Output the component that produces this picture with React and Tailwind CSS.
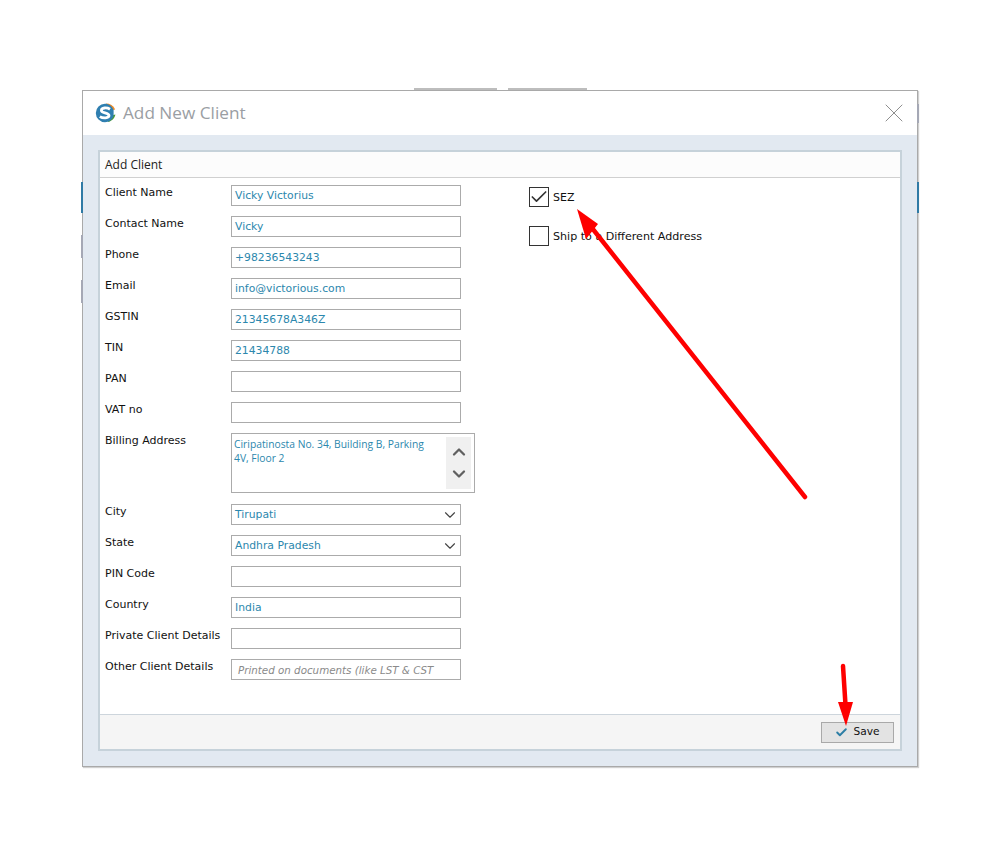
import React from 'react';
import { Check, ChevronDown, ChevronUp, X } from 'lucide-react';

const verdana = 'font-["DejaVu_Sans",sans-serif] text-[11px]';
const valueText = 'font-["DejaVu_Sans",sans-serif] text-[10.8px] text-[#2c87ad]';

function Row({ label, children }) {
  return (
    <div className="flex items-start">
      <div className={`w-[126px] pt-[1px] leading-[14px] text-[#111] ${verdana}`}>{label}</div>
      {children}
    </div>
  );
}

function Field({ label, value, placeholder }) {
  return (
    <Row label={label}>
      <div className={`flex h-[21px] w-[230px] items-center overflow-hidden whitespace-nowrap border border-[#ababab] bg-white px-[3px] pt-[2px] ${valueText}`}>
        {placeholder ? <span className="pl-[3px] text-[10.3px] italic text-[#8a8a8a]">{placeholder}</span> : value}
      </div>
    </Row>
  );
}

function Picker({ label, value }) {
  return (
    <Row label={label}>
      <div className={`flex h-[21px] w-[230px] items-center justify-between border border-[#ababab] bg-white pl-[3px] pr-[1px] ${valueText}`}>
        <span className="pt-[2px]">{value}</span>
        <ChevronDown className="h-[18px] w-[18px] text-[#444]" strokeWidth={1.5} />
      </div>
    </Row>
  );
}

function Logo() {
  return (
    <svg width="22" height="20" viewBox="0 0 22 20" className="shrink-0">
      <path d="M11 0.6 C15 0.6 18.4 2.6 20.2 6.4 L15.6 7.6 Z" fill="#f08a24" />
      <path d="M20.4 11.4 C19.6 15.4 16.6 18 13 19 L14.6 13 Z" fill="#4a9a34" />
      <path d="M10 0.8 A9.2 9.2 0 1 0 10 19.2 C14 19.2 17.4 16.6 18.6 13 L18.6 7 C17.4 3.4 14 0.8 10 0.8 Z" fill="#2f7fb0" />
      <path d="M15 6.2 C12 4.4 6.4 4.4 6.4 7.4 C6.4 10.4 14 9.2 14 12.6 C14 15.4 8 15.6 4.8 13.6" fill="none" stroke="#fff" strokeWidth="2.8" />
    </svg>
  );
}

function Arrows() {
  return (
    <svg width="1000" height="855" className="pointer-events-none absolute left-0 top-0">
      <line x1="805" y1="497" x2="592" y2="228" stroke="#fe0000" strokeWidth="4.5" strokeLinecap="round" />
      <polygon points="577,209 598,224 586,239" fill="#fe0000" />
      <line x1="843" y1="666" x2="845.5" y2="705" stroke="#fe0000" strokeWidth="4.5" strokeLinecap="round" />
      <polygon points="846,726 838,702 853,702" fill="#fe0000" />
    </svg>
  );
}

export default function App() {
  return (
    <div className="relative h-[855px] w-[1000px] overflow-hidden bg-white pt-[90px] pl-[82px]">
      <div className="flex h-[677px] w-[836px] flex-col border border-[#a9a9a9] shadow-[1px_1px_1px_#d0d0d0]">
        <div className="flex h-[44px] shrink-0 items-center justify-between bg-white pl-[12px] pr-[7px]">
          <div className="flex items-center gap-[6px]">
            <Logo />
            <span className='font-["Open_Sans",sans-serif] text-[17.2px] text-[#9a9ea3]'>Add New Client</span>
          </div>
          <X className="h-[32px] w-[32px] text-[#8e8e8e]" strokeWidth={0.75} />
        </div>

        <div className="flex-1 bg-[#e2e9f1] px-[15px] pt-[15px] pb-[15px]">
          <div className="flex h-full flex-col border-2 border-[#c6d2da] bg-white">
            <div className='flex h-[26px] shrink-0 items-center border-b border-[#d0d0d0] bg-[#fcfcfc] pl-[5px] font-["Open_Sans",sans-serif] text-[12px] text-[#222]'>
              Add Client
            </div>

            <div className="flex flex-1 pl-[5px] pt-[7px]">
              <div className="flex w-[424px] flex-col gap-[10px]">
                <Field label="Client Name" value="Vicky Victorius" />
                <Field label="Contact Name" value="Vicky" />
                <Field label="Phone" value="+98236543243" />
                <Field label="Email" value="info@victorious.com" />
                <Field label="GSTIN" value="21345678A346Z" />
                <Field label="TIN" value="21434788" />
                <Field label="PAN" value="" />
                <Field label="VAT no" value="" />
                <div className="mb-[1px]">
                  <Row label="Billing Address">
                    <div className='flex h-[60px] w-[244px] justify-between border border-[#ababab] bg-white pl-[2px] pr-[3px] pt-[3px] font-["Open_Sans",sans-serif] text-[10.3px] leading-[14px] text-[#2c87ad]'>
                      <span className="w-[200px]">Ciripatinosta No. 34, Building B, Parking 4V, Floor 2</span>
                      <div className="flex h-[52px] w-[25px] flex-col items-center justify-between bg-[#f0f0f0] py-[5px] text-[#606060]">
                        <ChevronUp className="h-[20px] w-[20px]" strokeWidth={2.75} />
                        <ChevronDown className="h-[20px] w-[20px]" strokeWidth={2.75} />
                      </div>
                    </div>
                  </Row>
                </div>
                <Picker label="City" value="Tirupati" />
                <Picker label="State" value="Andhra Pradesh" />
                <Field label="PIN Code" value="" />
                <Field label="Country" value="India" />
                <Field label="Private Client Details" value="" />
                <Field label="Other Client Details" placeholder="Printed on documents (like LST & CST" />
              </div>

              <div className={`flex flex-col gap-[19px] pt-[2px] text-[#111] ${verdana}`}>
                <div className="flex items-center gap-[4px]">
                  <div className="flex h-[20px] w-[20px] items-center justify-center border border-[#333]">
                    <Check className="h-[20px] w-[20px] shrink-0 text-[#333]" strokeWidth={2} />
                  </div>
                  <span className="pt-[2px]">SEZ</span>
                </div>
                <div className="flex items-center gap-[4px]">
                  <div className="h-[20px] w-[20px] border border-[#333]" />
                  <span className="pt-[2px] text-[11.1px]">Ship to a Different Address</span>
                </div>
              </div>
            </div>

            <div className="flex h-[35px] shrink-0 items-center justify-end border-t border-[#cdd5dc] bg-[#f5f5f5] pr-[6px]">
              <button className='flex h-[21px] w-[73px] items-center justify-center gap-[5px] border border-[#a9a9a9] bg-[#e3e3e3] font-["DejaVu_Sans",sans-serif] text-[10.6px] text-[#111]'>
                <Check className="h-[13px] w-[13px] text-[#2c7ea5]" strokeWidth={3.5} />
                Save
              </button>
            </div>
          </div>
        </div>
      </div>

      {/* bits of the page behind the dialog */}
      <div className="absolute left-[414px] top-[88px] h-[2px] w-[83px] bg-[#bdbdbd]" />
      <div className="absolute left-[508px] top-[88px] h-[2px] w-[79px] bg-[#bdbdbd]" />
      <div className="absolute left-[81px] top-[182px] h-[31px] w-[2px] bg-[#2f7aa5]" />
      <div className="absolute left-[917px] top-[182px] h-[31px] w-[2px] bg-[#2f7aa5]" />
      <div className="absolute left-[81px] top-[235px] h-[23px] w-[2px] bg-[#a5a8b5]" />
      <div className="absolute left-[81px] top-[280px] h-[23px] w-[2px] bg-[#a5a8b5]" />
      <div className="absolute left-[917px] top-[104px] h-[19px] w-[2px] bg-[#a5a8b5]" />

      <Arrows />
    </div>
  );
}
